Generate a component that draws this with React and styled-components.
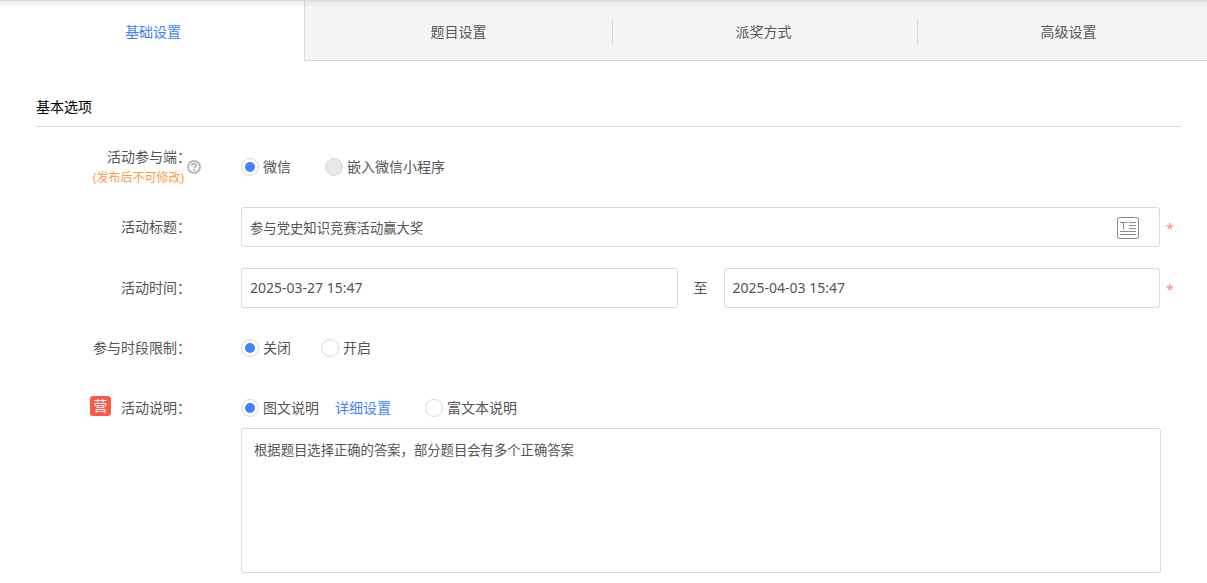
import React, { useState } from "react";
import styled, { createGlobalStyle, css } from "styled-components";

const fontStack = '"Noto Sans", "Noto Sans CJK SC", sans-serif';

const GlobalStyle = createGlobalStyle`
  * { box-sizing: border-box; }
  body {
    margin: 0;
    background: #fff;
    color: #555;
    font: 14px/20px ${fontStack};
  }
`;

const Page = styled.div`
  overflow: hidden;
  border-top: 1px solid #d9d9d9;
`;

const TabBar = styled.nav`
  position: relative;
  display: grid;
  grid-template-columns: repeat(4, 1fr);
  height: 60px;
  margin-right: -13px;

  &::after {
    content: "";
    position: absolute;
    inset: 0 0 auto 0;
    height: 7px;
    background: linear-gradient(rgba(0, 0, 0, 0.07), rgba(0, 0, 0, 0));
    pointer-events: none;
  }
`;

const Tab = styled.button`
  position: relative;
  padding: 2px 0 0 2px;
  border: 0;
  border-bottom: 1px solid #d9d9d9;
  background: #f5f5f5;
  color: #555;
  font: 14px/20px ${fontStack};
  cursor: pointer;

  & + &::before {
    content: "";
    position: absolute;
    left: 2px;
    top: 18px;
    height: 26px;
    border-left: 1px solid #d9d9d9;
  }

  ${({ $active }) =>
    $active &&
    css`
      border-right: 1px solid #d9d9d9;
      border-bottom-color: #fff;
      background: #fff;
      color: #4381fd;

      & + button::before {
        display: none;
      }
    `}
`;

const Form = styled.form`
  padding: 36px 26px 10px 36px;
`;

const SectionTitle = styled.h2`
  margin: 0 0 20px;
  padding-bottom: 9px;
  border-bottom: 1px solid #d9d9d9;
  color: #000;
  font-size: 14px;
  font-weight: 400;
  line-height: 20px;
`;

const Row = styled.div`
  display: grid;
  grid-template-columns: 155px 50px minmax(0, 1fr) 21px;
  align-items: center;
  min-height: 40px;
  margin-bottom: ${({ $gap = 20 }) => $gap}px;
`;

const RowLabel = styled.div`
  display: flex;
  flex-direction: ${({ $stacked }) => ($stacked ? "column" : "row")};
  justify-content: flex-end;
  align-items: ${({ $stacked }) => ($stacked ? "flex-end" : "center")};
  gap: ${({ $stacked }) => ($stacked ? 2 : 10)}px;
`;

const Note = styled.small`
  padding-right: 7px;
  color: #ff9c3f;
  font-size: 12px;
  line-height: 18px;
`;

const Badge = styled.span`
  width: 21px;
  height: 20px;
  margin-bottom: 4px;
  border-radius: 3px;
  background: #fb5b46;
  color: #fff;
  text-align: center;
`;

const HelpButton = styled.button`
  display: flex;
  justify-self: start;
  margin-left: -4px;
  padding: 0;
  border: 0;
  background: none;
  cursor: pointer;
`;

const Field = styled.div`
  grid-column: 3;
  display: flex;
  align-items: center;
  gap: ${({ $gap = 0 }) => $gap}px;
`;

const OptionGroup = styled.div`
  display: flex;
  gap: 16px;
`;

const Option = styled.label`
  display: flex;
  align-items: center;
  gap: 4px;
`;

const Radio = styled.input`
  appearance: none;
  display: grid;
  place-items: center;
  width: 18px;
  height: 18px;
  margin: 0;
  border: 1px solid #d9d9d9;
  border-radius: 50%;
  background: #fff;

  &:checked::before {
    content: "";
    width: 10px;
    height: 10px;
    border-radius: 50%;
    background: #4381fd;
  }

  &:disabled {
    background: #e8e8e8;
  }
`;

const DetailLink = styled.a`
  color: #4381fd;
  text-decoration: none;
`;

const InputBox = styled.div`
  display: flex;
  align-items: center;
  flex: 1;
  min-width: 0;
  height: 40px;
  padding: 0 20px 0 8px;
  border: 1px solid #d9d9d9;
  border-radius: 3px;
`;

const TextInput = styled.input`
  flex: 1;
  min-width: 0;
  padding: 0;
  border: 0;
  outline: 0;
  background: none;
  color: #555;
  font-family: ${fontStack};
`;

const DateInput = styled(TextInput)`
  padding-bottom: 2px;
  font-size: 14px;
`;

const IconButton = styled.button`
  display: flex;
  padding: 2px 0 0;
  border: 0;
  background: none;
  cursor: pointer;
`;

const Required = styled.span`
  padding-left: 6px;
  padding-top: 4px;
  color: #ff8a78;
`;

const Description = styled.textarea`
  display: block;
  width: calc(100% - 225px);
  height: 145px;
  margin: 0 0 0 205px;
  padding: 11px 12px;
  border: 1px solid #d9d9d9;
  border-radius: 3px;
  outline: 0;
  resize: none;
  color: #555;
  font-family: ${fontStack};
  line-height: 20px;
`;

const HelpIcon = () => (
  <svg width="14" height="14" viewBox="0 0 14 14" fill="none" stroke="#b8b8b8" aria-hidden="true">
    <circle cx="7" cy="7" r="6" strokeWidth="2" />
    <path d="M4.800 5.700C4.800 4.300 5.700 3.700 7 3.700s2.200.7 2.200 1.800C9.200 6.800 7 6.900 7 8.600" strokeWidth="1.800" />
    <path d="M7 9.300v1.700" strokeWidth="1.900" />
  </svg>
);

const TemplateIcon = () => (
  <svg width="22" height="22" viewBox="0 0 22 22" fill="none" stroke="#8c8c8c" aria-hidden="true">
    <rect x="0.5" y="0.5" width="21" height="21" rx="1.500" />
    <path d="M3 5.500h7M6.500 5.500v7M12 5.500h7M12 8.500h7M12 11.500h7M3 14.500h16M3 17.500h16" />
  </svg>
);

const tabs = ["基础设置", "题目设置", "派奖方式", "高级设置"];

export default function App() {
  const [tab, setTab] = useState(tabs[0]);

  return (
    <>
      <GlobalStyle />
      <Page>
        <TabBar>
          {tabs.map((name) => (
            <Tab key={name} type="button" $active={name === tab} onClick={() => setTab(name)}>
              {name}
            </Tab>
          ))}
        </TabBar>
        <Form>
          <SectionTitle>基本选项</SectionTitle>

          <Row role="radiogroup" aria-labelledby="client-label">
            <RowLabel $stacked>
              <span id="client-label">活动参与端：</span>
              <Note>(发布后不可修改)</Note>
            </RowLabel>
            <HelpButton type="button" aria-label="帮助">
              <HelpIcon />
            </HelpButton>
            <Field $gap={34}>
              <Option>
                <Radio type="radio" name="client" defaultChecked />
                微信
              </Option>
              <Option>
                <Radio type="radio" name="client" disabled />
                嵌入微信小程序
              </Option>
            </Field>
          </Row>

          <Row $gap={21}>
            <RowLabel>
              <label htmlFor="title">活动标题：</label>
            </RowLabel>
            <Field>
              <InputBox>
                <TextInput id="title" defaultValue="参与党史知识竞赛活动赢大奖" />
                <IconButton type="button" aria-label="标题模板">
                  <TemplateIcon />
                </IconButton>
              </InputBox>
            </Field>
            <Required>*</Required>
          </Row>

          <Row>
            <RowLabel>
              <label htmlFor="start">活动时间：</label>
            </RowLabel>
            <Field $gap={16}>
              <InputBox>
                <DateInput id="start" defaultValue="2025-03-27 15:47" />
              </InputBox>
              <label htmlFor="end">至</label>
              <InputBox>
                <DateInput id="end" defaultValue="2025-04-03 15:47" />
              </InputBox>
            </Field>
            <Required>*</Required>
          </Row>

          <Row role="radiogroup" aria-labelledby="period-label">
            <RowLabel>
              <span id="period-label">参与时段限制：</span>
            </RowLabel>
            <Field $gap={30}>
              <Option>
                <Radio type="radio" name="period" defaultChecked />
                关闭
              </Option>
              <Option>
                <Radio type="radio" name="period" />
                开启
              </Option>
            </Field>
          </Row>

          <Row $gap={0} role="radiogroup" aria-labelledby="description-label">
            <RowLabel>
              <Badge>营</Badge>
              <label id="description-label" htmlFor="description">活动说明：</label>
            </RowLabel>
            <Field $gap={34}>
              <OptionGroup>
                <Option>
                  <Radio type="radio" name="descriptionType" defaultChecked />
                  图文说明
                </Option>
                <DetailLink href="#detail">详细设置</DetailLink>
              </OptionGroup>
              <Option>
                <Radio type="radio" name="descriptionType" />
                富文本说明
              </Option>
            </Field>
          </Row>
          <Description id="description" defaultValue="根据题目选择正确的答案，部分题目会有多个正确答案" />
        </Form>
      </Page>
    </>
  );
}
